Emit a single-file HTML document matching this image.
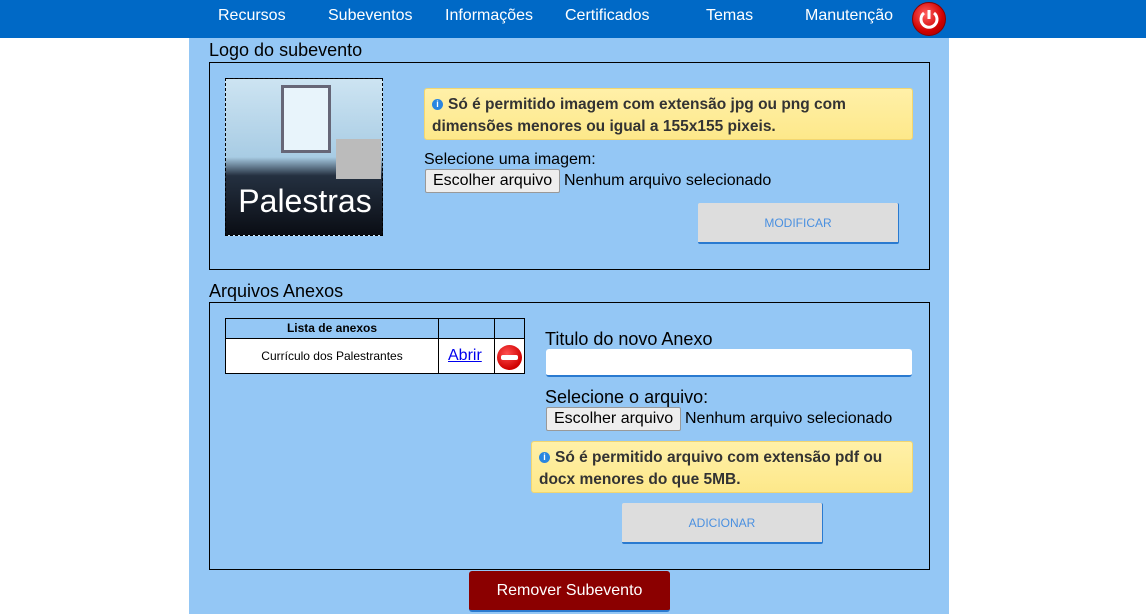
<!DOCTYPE html>
<html><head><meta charset="utf-8"><style>
*{margin:0;padding:0;box-sizing:border-box}
body{width:1146px;height:614px;background:#fff;font-family:"Liberation Sans",sans-serif;position:relative;overflow:hidden}
.a{position:absolute}
.nav{left:0;top:0;width:1146px;height:38px;background:#0069c6}
.nav span{position:absolute;top:7px;color:#fff;font-size:16px}
.main{left:189px;top:38px;width:760px;height:576px;background:#94c7f5}
.box{border:1px solid #000}
.info{background:linear-gradient(#fff0a8,#fde88a);border:1px solid #f2d670;border-radius:3px;font-weight:bold;color:#333;font-size:15.5px;line-height:22px;padding:5px 7px}
.ic{display:inline-block;width:11px;height:11px;border-radius:50%;background:#2a86e0;color:#fff;font-size:9px;line-height:11px;text-align:center;vertical-align:2px;margin-right:5px}
.fb{background:#eee;border:1px solid #999;border-radius:2px;font-size:16px;padding:0 7px;height:24px;line-height:22px}
.btn{background:#ddd;border-bottom:2px solid #2a7ad0;border-right:1px solid #2a7ad0;color:#4a90e0;font-size:12px;text-align:center;border-radius:2px}
</style></head><body>
<div class="a nav">
<span style="left:218px">Recursos</span><span style="left:328px">Subeventos</span><span style="left:445px">Informações</span><span style="left:565px">Certificados</span><span style="left:706px">Temas</span><span style="left:805px">Manutenção</span>
<div class="a" style="left:912px;top:2px;width:34px;height:34px;border-radius:50%;background:radial-gradient(circle at 40% 35%,#ff6060,#d00000 60%,#900);border:1px solid #800"><svg width="34" height="34" viewBox="0 0 34 34" style="position:absolute;left:-1px;top:-1px"><path d="M12 11a8 8 0 1 0 10 0" fill="none" stroke="#fff" stroke-width="3"/><path d="M17 8v9" stroke="#fff" stroke-width="3"/></svg></div>
</div>
<div class="a main"></div>
<div class="a" style="left:209px;top:40px;font-size:18px">Logo do subevento</div>
<div class="a box" style="left:209px;top:62px;width:721px;height:208px"></div>
<div class="a" style="left:225px;top:78px;width:158px;height:158px;border:1px dashed #000;background:linear-gradient(#cde4f2 0%,#a8cce4 50%,#243040 62%,#0a0d14 100%);overflow:hidden">
<div class="a" style="left:55px;top:6px;width:50px;height:68px;background:#e8f4fb;border:3px solid #667"></div>
<div class="a" style="left:110px;top:60px;width:45px;height:40px;background:#bbb"></div>
<div class="a" style="left:0;top:104px;width:158px;font-size:32px;color:#fff;text-align:center">Palestras</div>
</div>
<div class="a info" style="left:424px;top:88px;width:489px;height:52px"><span class="ic">i</span>Só é permitido imagem com extensão jpg ou png com dimensões menores ou igual a 155x155 pixeis.</div>
<div class="a" style="left:424px;top:151px;font-size:16px">Selecione uma imagem:</div>
<div class="a fb" style="left:425px;top:169px">Escolher arquivo</div>
<div class="a" style="left:564px;top:172px;font-size:16px">Nenhum arquivo selecionado</div>
<div class="a btn" style="left:698px;top:203px;width:201px;height:41px;line-height:41px">MODIFICAR</div>
<div class="a" style="left:209px;top:281px;font-size:18px">Arquivos Anexos</div>
<div class="a box" style="left:209px;top:302px;width:721px;height:268px"></div>
<div class="a" style="left:225px;top:318px;width:300px;height:56px;background:#fff;border:1px solid #000">
<div class="a" style="left:0;top:0;width:298px;height:20px;background:#94c7f5;border-bottom:1px solid #000"></div>
<div class="a" style="left:0;top:2px;width:212px;text-align:center;font-size:12px;font-weight:bold">Lista de anexos</div>
<div class="a" style="left:0;top:30px;width:212px;text-align:center;font-size:12px">Currículo dos Palestrantes</div>
<div class="a" style="left:222px;top:28px;font-size:16px;color:#00e;text-decoration:underline">Abrir</div>
</div>
<div class="a" style="left:438px;top:318px;width:1px;height:56px;background:#000"></div>
<div class="a" style="left:494px;top:318px;width:1px;height:56px;background:#000"></div>
<div class="a" style="left:497px;top:345px;width:25px;height:25px;border-radius:50%;background:radial-gradient(circle at 40% 35%,#ff5050,#d00000 70%)"><div class="a" style="left:4px;top:10px;width:17px;height:5px;background:#fff;border-radius:2px"></div></div>
<div class="a" style="left:545px;top:329px;font-size:18px">Titulo do novo Anexo</div>
<div class="a" style="left:546px;top:349px;width:366px;height:28px;background:#fff;border-radius:3px;border-bottom:2px solid #2a7ad0"></div>
<div class="a" style="left:545px;top:387px;font-size:18px">Selecione o arquivo:</div>
<div class="a fb" style="left:546px;top:407px">Escolher arquivo</div>
<div class="a" style="left:685px;top:410px;font-size:16px">Nenhum arquivo selecionado</div>
<div class="a info" style="left:531px;top:441px;width:382px;height:52px"><span class="ic">i</span>Só é permitido arquivo com extensão pdf ou docx menores do que 5MB.</div>
<div class="a btn" style="left:622px;top:503px;width:201px;height:41px;line-height:41px">ADICIONAR</div>
<div class="a" style="left:469px;top:571px;width:201px;height:41px;background:#8b0000;border-radius:3px;border-bottom:2px solid #2a7ad0;color:#fff;font-size:16px;text-align:center;line-height:40px">Remover Subevento</div>
</body></html>
